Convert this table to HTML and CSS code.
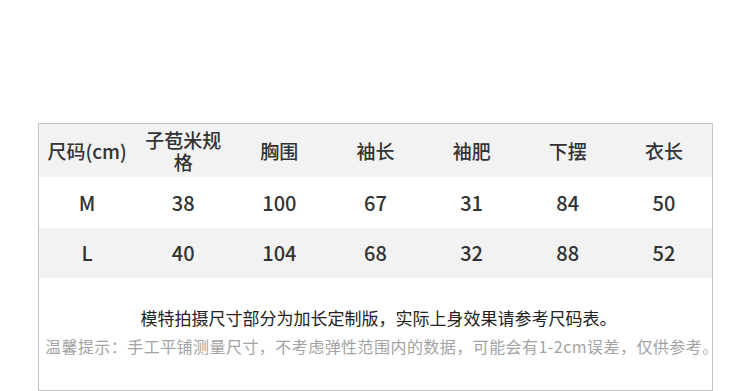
FILE: index.html
```html
<!DOCTYPE html>
<html lang="zh">
<head>
<meta charset="utf-8">
<link rel="stylesheet" href="styles.css">
</head>
<body>
<div class="page">
  <div class="sheet">
    <div class="row head">
      <div class="cell">尺码(cm)</div>
      <div class="cell">子苞米规格</div>
      <div class="cell">胸围</div>
      <div class="cell">袖长</div>
      <div class="cell">袖肥</div>
      <div class="cell">下摆</div>
      <div class="cell">衣长</div>
    </div>
    <div class="row data">
      <div class="cell">M</div>
      <div class="cell">38</div>
      <div class="cell">100</div>
      <div class="cell">67</div>
      <div class="cell">31</div>
      <div class="cell">84</div>
      <div class="cell">50</div>
    </div>
    <div class="row data alt">
      <div class="cell">L</div>
      <div class="cell">40</div>
      <div class="cell">104</div>
      <div class="cell">68</div>
      <div class="cell">32</div>
      <div class="cell">88</div>
      <div class="cell">52</div>
    </div>
    <div class="notes">
      <p class="note-main">模特拍摄尺寸部分为加长定制版，实际上身效果请参考尺码表。</p>
      <p class="note-tip">温馨提示：手工平铺测量尺寸，不考虑弹性范围内的数据，可能会有1-2cm误差，仅供参考。</p>
    </div>
  </div>
</div>
</body>
</html>
```

FILE: styles.css
```css
* { box-sizing: border-box; }
html, body { margin: 0; padding: 0; background: #fff; }
body {
  font-family: "Noto Sans CJK SC", "Noto Sans", sans-serif;
  color: #333;
}
.page {
  width: 750px;
  height: 391px;
  padding: 123px 37px 0 38px;
  overflow: hidden;
}
.sheet {
  width: 675px;
  height: 268px;
  border: 1px solid #c4c4c4;
  display: flex;
  flex-direction: column;
}
.row {
  display: grid;
  grid-template-columns: repeat(7, 1fr);
  align-items: center;
}
.cell {
  text-align: center;
  padding: 0 6px;
}
.head {
  height: 53px;
  background: #f2f2f2;
  font-size: 19px;
  font-weight: 500;
  line-height: 22px;
}
.data {
  height: 51px;
  font-size: 20px;
  font-weight: 500;
  line-height: 24px;
}
.alt {
  height: 50px;
  background: #f2f2f2;
}
.notes {
  flex: 1;
  text-align: center;
  padding: 28px 0 0 6px;
}
.notes p { margin: 0; white-space: nowrap; }
.note-main {
  font-size: 17px;
  line-height: 24px;
  color: #222;
}
.note-tip {
  margin-top: 5px !important;
  font-size: 16px;
  line-height: 22px;
  color: #a3a3a3;
  letter-spacing: 0.45px;
}
```
